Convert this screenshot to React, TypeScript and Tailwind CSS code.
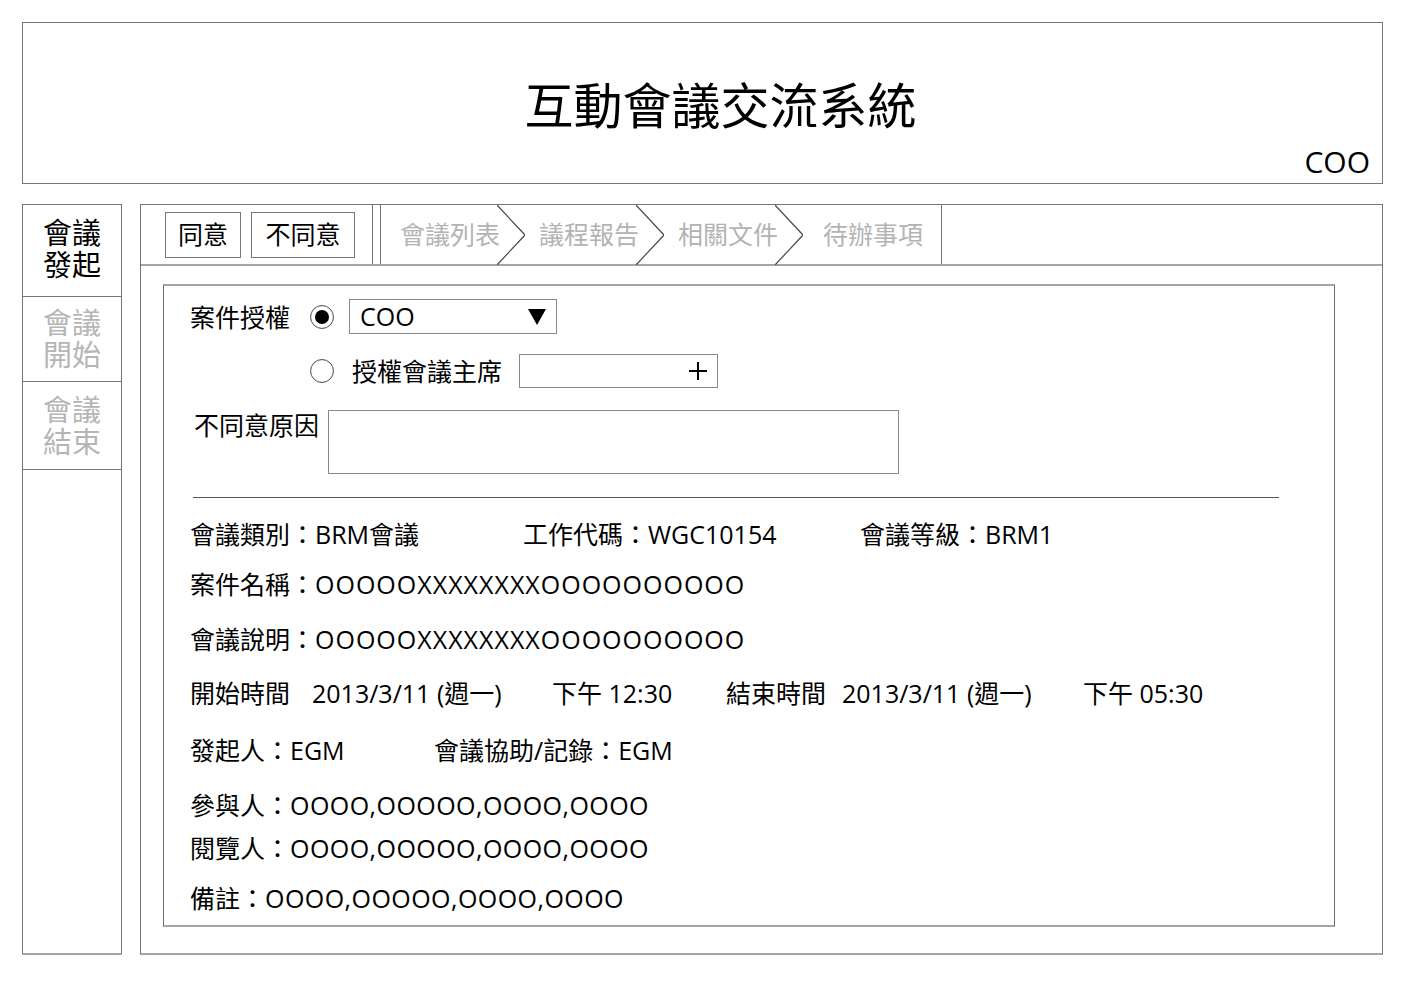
import React from "react";

const FONT = "font-['Open_Sans','Noto_Sans_CJK_TC',sans-serif]";

function Chevron() {
  return (
    <svg width="28" height="60" viewBox="0 0 28 60" className="shrink-0 self-stretch -ml-[3px]">
      <polyline points="0,0 28,30 0,60" fill="none" stroke="#4a4a4a" strokeWidth="1.2" />
    </svg>
  );
}

function Radio({ checked }: { checked?: boolean }) {
  return (
    <div className="w-[24px] h-[24px] rounded-full border-[1.5px] border-[#555] shadow-[inset_0_0_1px_#999] flex items-center justify-center shrink-0 bg-white">
      {checked && <div className="w-[14px] h-[14px] rounded-full bg-black" />}
    </div>
  );
}

function SideItem({ h, top, bottom, active }: { h: string; top: string; bottom: string; active?: boolean }) {
  return (
    <div className={`${h} border-b border-[#767676] flex flex-col items-center justify-center text-[29px] leading-[32px] ${active ? "text-black" : "text-[#b5b5b5]"}`}>
      <div className="h-[32px]">{top}</div>
      <div className="h-[32px]">{bottom}</div>
    </div>
  );
}

export default function App() {
  return (
    <div className={`${FONT} w-[1403px] h-[992px] bg-white text-black pt-[22px] pl-[22px] pr-[20px]`}>
      {/* Header */}
      <div className="relative h-[162px] border border-[#767676] flex items-center justify-center">
        <div className="text-[49px] leading-none pt-[4px] ml-[36px]">互動會議交流系統</div>
        <div className="absolute right-[12px] bottom-[6px] text-[30px] leading-none">COO</div>
      </div>

      <div className="flex mt-[20px] gap-[18px]">
        {/* Sidebar */}
        <div className="w-[100px] h-[751px] border border-[#767676] border-b-2 border-b-[#a8a4a0] flex flex-col">
          <SideItem h="h-[92px] pb-[4px]" top="會議" bottom="發起" active />
          <SideItem h="h-[85px]" top="會議" bottom="開始" />
          <SideItem h="h-[88px]" top="會議" bottom="結束" />
        </div>

        {/* Main panel */}
        <div className="w-[1243px] h-[751px] border border-[#767676] border-b-2 border-b-[#a8a4a0] flex flex-col">
          {/* Tab bar */}
          <div className="h-[61px] border-b-2 border-[#a8a4a0] flex items-stretch shrink-0">
            <div className="flex items-center pl-[24px] gap-[10px]">
              <div className="w-[76px] h-[46px] border border-[#767676] flex items-center justify-center text-[25px] leading-none">同意</div>
              <div className="w-[104px] h-[46px] border border-[#767676] flex items-center justify-center text-[25px] leading-none">不同意</div>
            </div>
            <div className="ml-[17px] w-px bg-[#767676]" />
            <div className="ml-[7px] w-px bg-[#767676]" />
            <div className="flex items-center border-r border-[#767676] text-[25px] leading-none text-[#b3b3b3]">
              <span className="pl-[19px]">會議列表</span>
              <Chevron />
              <span className="pl-[14px]">議程報告</span>
              <Chevron />
              <span className="pl-[14px]">相關文件</span>
              <Chevron />
              <span className="pl-[20px] pr-[18px]">待辦事項</span>
            </div>
          </div>

          {/* Inner box */}
          <div className="ml-[22px] mt-[18px] w-[1172px] h-[643px] border-x border-x-[#6a6a6a] border-y-2 border-y-[#a8a4a0] text-[25px] leading-[32px]">
            {/* Row 1 */}
            <div className="mt-[13px] pl-[26px] flex items-center h-[35px]">
              <span className="w-[120px]">案件授權</span>
              <Radio checked />
              <div className="ml-[15px] w-[208px] h-[35px] border border-[#8a8a8a] flex items-center justify-between pl-[10px] pr-[10px]">
                <span className="text-[25px] leading-none">COO</span>
                <svg width="18" height="16" viewBox="0 0 18 16">
                  <polygon points="0,0 18,0 9,16" fill="#000" />
                </svg>
              </div>
            </div>
            {/* Row 2 */}
            <div className="mt-[20px] pl-[146px] flex items-center h-[34px]">
              <Radio />
              <span className="ml-[18px]">授權會議主席</span>
              <div className="ml-[17px] w-[199px] h-[34px] border border-[#8a8a8a] flex items-center justify-end pr-[10px]">
                <svg width="18" height="18" viewBox="0 0 18 18">
                  <line x1="9" y1="0" x2="9" y2="18" stroke="#000" strokeWidth="2" />
                  <line x1="0" y1="9" x2="18" y2="9" stroke="#000" strokeWidth="2" />
                </svg>
              </div>
            </div>
            {/* Row 3 */}
            <div className="mt-[22px] pl-[30px] flex items-start">
              <span className="w-[134px] -mt-[1px]">不同意原因</span>
              <div className="w-[571px] h-[64px] border border-[#8a8a8a]" />
            </div>
            {/* Divider */}
            <div className="mt-[23px] ml-[29px] w-[1086px] h-px bg-[#555]" />

            {/* Info rows */}
            <div className="pl-[26px]">
              <div className="mt-[20px] flex">
                <span className="w-[333px]">會議類別：BRM會議</span>
                <span className="w-[337px]">工作代碼：WGC10154</span>
                <span>會議等級：BRM1</span>
              </div>
              <div className="mt-[18px]">案件名稱：<span className="tracking-[1px]">OOOOOXXXXXXXXOOOOOOOOOO</span></div>
              <div className="mt-[23px]">會議說明：<span className="tracking-[1px]">OOOOOXXXXXXXXOOOOOOOOOO</span></div>
              <div className="mt-[22px] flex">
                <span className="w-[122px]">開始時間</span>
                <span className="w-[240px]">2013/3/11 (週一)</span>
                <span className="w-[174px]">下午 12:30</span>
                <span className="w-[116px]">結束時間</span>
                <span className="w-[241px]">2013/3/11 (週一)</span>
                <span>下午 05:30</span>
              </div>
              <div className="mt-[25px] flex">
                <span className="w-[244px]">發起人：EGM</span>
                <span>會議協助/記錄：EGM</span>
              </div>
              <div className="mt-[23px]">參與人：<span className="tracking-[0.45px]">OOOO,OOOOO,OOOO,OOOO</span></div>
              <div className="mt-[11px]">閱覽人：<span className="tracking-[0.45px]">OOOO,OOOOO,OOOO,OOOO</span></div>
              <div className="mt-[18px]">備註：<span className="tracking-[0.45px]">OOOO,OOOOO,OOOO,OOOO</span></div>
            </div>
          </div>
        </div>
      </div>
    </div>
  );
}
